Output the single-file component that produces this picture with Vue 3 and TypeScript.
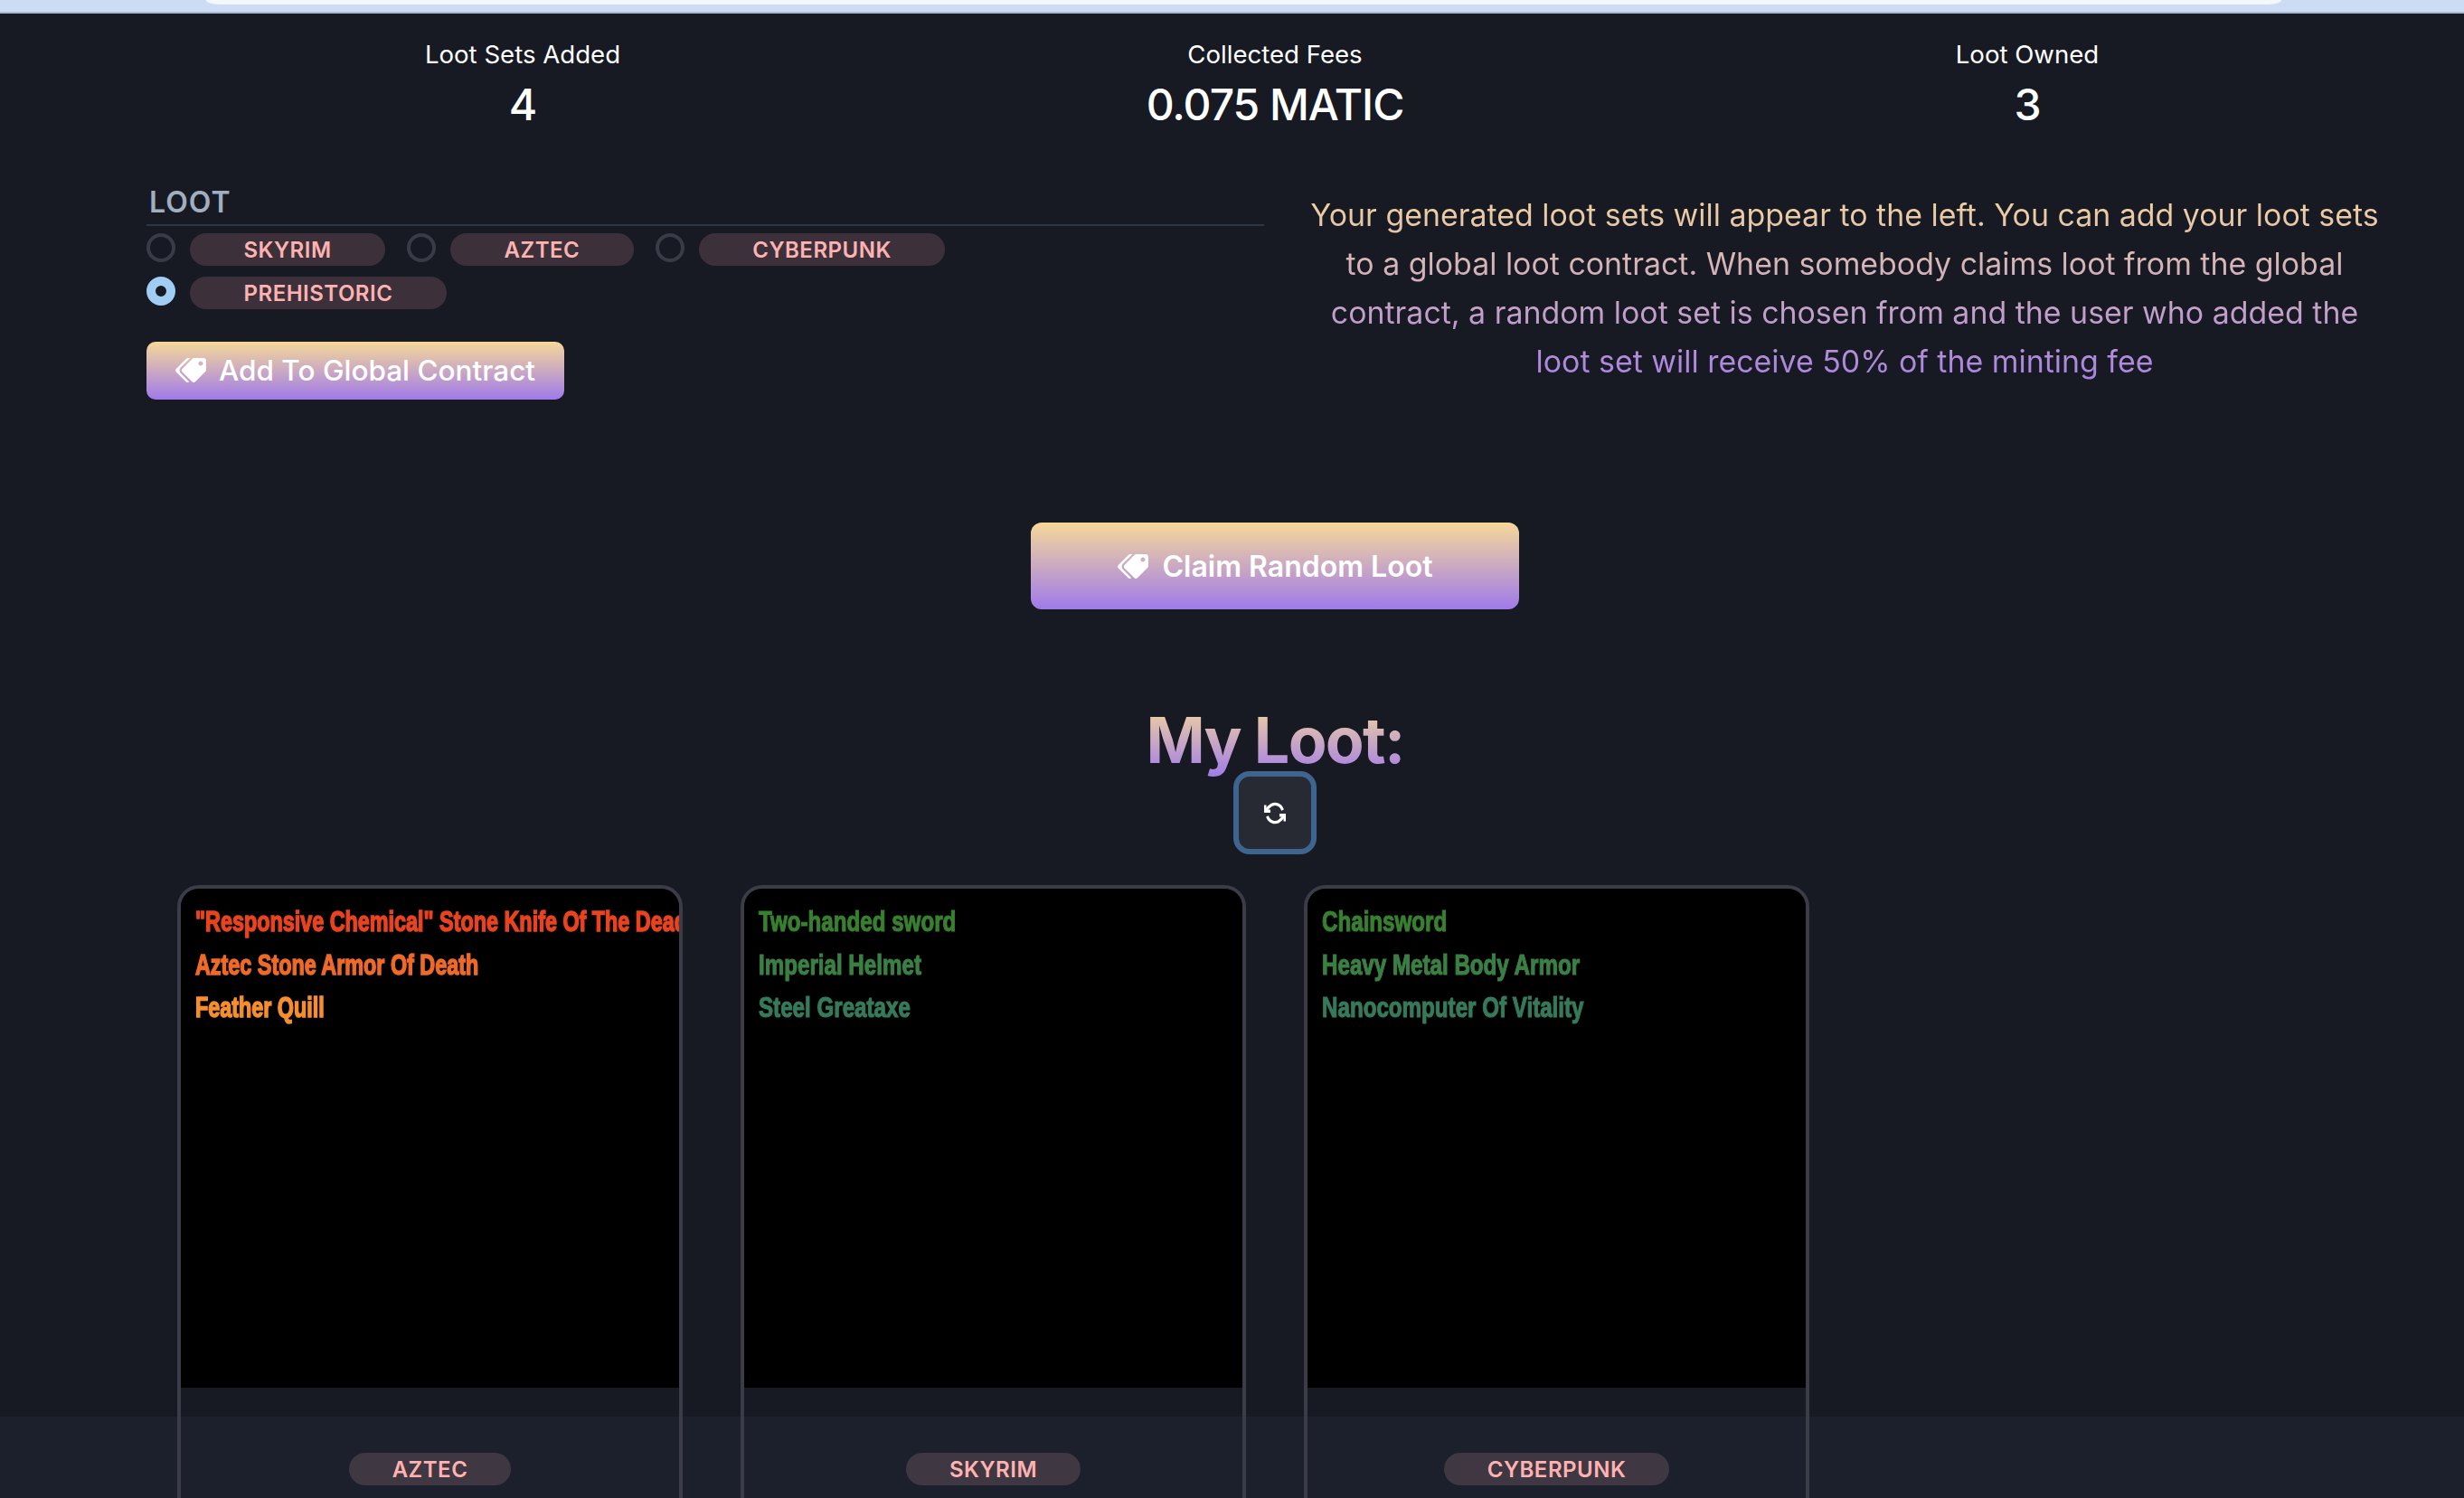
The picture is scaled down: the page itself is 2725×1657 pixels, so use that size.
<script setup lang="ts">
const tagPath =
  "M497.941 225.941L286.059 14.059A48 48 0 0 0 252.118 0H48C21.49 0 0 21.49 0 48v204.118a48 48 0 0 0 14.059 33.941l211.882 211.882c18.744 18.745 49.136 18.746 67.882 0l204.118-204.118c18.745-18.745 18.745-49.137 0-67.882zM112 160c-26.51 0-48-21.49-48-48s21.49-48 48-48 48 21.49 48 48-21.49 48-48 48zm513.941 133.823L421.823 497.941c-18.745 18.745-49.137 18.745-67.882 0l-.36-.36L527.64 323.522c16.999-16.999 26.36-39.6 26.36-63.64s-9.362-46.641-26.36-63.64L331.397 0h48.721a48 48 0 0 1 33.941 14.059l211.882 211.882c18.745 18.745 18.745 49.137 0 67.882z";

const stats = [
  { label: "Loot Sets Added", value: "4" },
  { label: "Collected Fees", value: "0.075 MATIC" },
  { label: "Loot Owned", value: "3" },
];

const options = [
  { name: "SKYRIM", checked: false },
  { name: "AZTEC", checked: false },
  { name: "CYBERPUNK", checked: false },
  { name: "PREHISTORIC", checked: true },
];

const cards = [
  {
    tag: "AZTEC",
    face: "impact",
    lines: [
      { text: '"Responsive Chemical" Stone Knife Of The Dead', color: "#e9431f" },
      { text: "Aztec Stone Armor Of Death", color: "#ef6a28" },
      { text: "Feather Quill", color: "#f68e2f" },
    ],
  },
  {
    tag: "SKYRIM",
    face: "narrow",
    lines: [
      { text: "Two-handed sword", color: "#37802f" },
      { text: "Imperial Helmet", color: "#3a8044" },
      { text: "Steel Greataxe", color: "#367a5c" },
    ],
  },
  {
    tag: "CYBERPUNK",
    face: "narrow",
    lines: [
      { text: "Chainsword", color: "#37802f" },
      { text: "Heavy Metal Body Armor", color: "#3a8044" },
      { text: "Nanocomputer Of Vitality", color: "#367a5c" },
    ],
  },
];
</script>

<template>
  <div class="page">
    <div class="browser-bar"><div class="browser-pill"></div></div>

    <section class="stats">
      <div v-for="stat in stats" :key="stat.label" class="stat">
        <div class="stat-label">{{ stat.label }}</div>
        <div class="stat-value">{{ stat.value }}</div>
      </div>
    </section>

    <section class="add-row">
      <div class="loot-form">
        <div class="loot-label">LOOT</div>
        <div class="options">
          <label v-for="opt in options" :key="opt.name" class="option">
            <span class="radio" :class="{ checked: opt.checked }"></span>
            <span class="tag">{{ opt.name }}</span>
          </label>
        </div>
        <button type="button" class="grad-btn add-btn">
          <svg class="tags-icon" viewBox="0 0 640 512" fill="currentColor">
            <path :d="tagPath" transform="matrix(-1 0 0 1 640 0)" />
          </svg>
          Add To Global Contract
        </button>
      </div>
      <p class="help">
        Your generated loot sets will appear to the left. You can add your loot sets<br />
        to a global loot contract. When somebody claims loot from the global<br />
        contract, a random loot set is chosen from and the user who added the<br />
        loot set will receive 50% of the minting fee
      </p>
    </section>

    <section class="center-col">
      <button type="button" class="grad-btn claim-btn">
        <svg class="tags-icon" viewBox="0 0 640 512" fill="currentColor">
          <path :d="tagPath" transform="matrix(-1 0 0 1 640 0)" />
        </svg>
        Claim Random Loot
      </button>

      <h2 class="title">My Loot:</h2>
      <button type="button" class="refresh" aria-label="Refresh">
        <svg viewBox="0 0 24 24" fill="none" stroke="currentColor" stroke-width="3" preserveAspectRatio="none">
          <path d="M1 4v6h6" />
          <path d="M23 20v-6h-6" />
          <path d="M20.490 9A9 9 0 0 0 5.640 5.640L1 10m22 4l-4.640 4.360A9 9 0 0 1 3.510 15" />
        </svg>
      </button>
    </section>

    <section class="cards">
      <article v-for="card in cards" :key="card.tag" class="card">
        <div class="sheet">
          <div
            v-for="line in card.lines"
            :key="line.text"
            class="loot-line"
            :class="card.face"
            :style="{ color: line.color }"
          >
            {{ line.text }}
          </div>
        </div>
        <div class="card-foot"><span class="tag">{{ card.tag }}</span></div>
      </article>
    </section>
  </div>
</template>

<style>
html,
body {
  margin: 0;
  background: #171923;
}
</style>

<style scoped>
.page {
  height: 1657px;
  overflow: hidden;
  box-sizing: border-box;
  font-family: Inter, "Liberation Sans", sans-serif;
  color: #fff;
  background: linear-gradient(#171923 1567px, #1b202c 1567px);
}

.browser-bar {
  height: 13px;
  background: #cddcf5;
  border-bottom: 2px solid #aab8d0;
  padding: 0 202px 0 228px;
}

.browser-pill {
  height: 5px;
  background: #f3f8fd;
  border-radius: 0 0 15px 15px / 0 0 5px 5px;
}

.stats {
  display: grid;
  grid-template-columns: repeat(3, 832px);
  margin-top: 25px;
  padding-left: 162px;
  text-align: center;
}

.stat-label {
  font-size: 27.600px;
  line-height: 40px;
}

.stat-value {
  font-size: 48px;
  line-height: 60px;
  font-weight: 500;
  letter-spacing: -1px;
  margin-top: 6px;
}

.add-row {
  display: flex;
  margin-top: 58px;
  padding-left: 162px;
}

.loot-form {
  width: 1236px;
}

.loot-label {
  font-size: 32px;
  line-height: 40px;
  font-weight: 600;
  letter-spacing: 1px;
  color: #a0aec0;
  padding-left: 3px;
  border-bottom: 2px solid #2d3748;
  padding-bottom: 4px;
}

.options {
  display: flex;
  flex-wrap: wrap;
  gap: 12px 24px;
  margin-top: 8px;
  width: 900px;
}

.option {
  display: flex;
  gap: 16px;
}

.radio {
  box-sizing: border-box;
  width: 32px;
  height: 32px;
  border-radius: 50%;
  border: 4px solid #383c47;
}

.radio.checked {
  border: 10px solid #9fcdf4;
  background: #171923;
}

.tag {
  display: inline-flex;
  align-items: center;
  height: 36px;
  padding: 0 59.500px;
  border-radius: 18px;
  background: rgba(254, 178, 178, 0.16);
  color: #feb2b2;
  font-size: 24px;
  font-weight: 600;
  letter-spacing: 0.5px;
}

.grad-btn {
  display: flex;
  align-items: center;
  justify-content: center;
  border: 0;
  color: #fff;
  font-family: inherit;
  background: linear-gradient(#f6d899, #9f7aea);
  cursor: pointer;
}

.add-btn {
  width: 462px;
  height: 64px;
  margin-top: 36px;
  padding: 0 0 2px;
  border-radius: 10px;
  gap: 14px;
  font-size: 31.500px;
  font-weight: 500;
}

.tags-icon {
  width: 34px;
  height: 27px;
}

.help {
  width: 1200px;
  margin: 0;
  margin-left: 42px;
  padding-top: 7px;
  text-align: center;
  white-space: nowrap;
  font-size: 33.900px;
  line-height: 54px;
  background: linear-gradient(#f6d899, #9f7aea);
  -webkit-background-clip: text;
  background-clip: text;
  color: transparent;
}

.center-col {
  display: flex;
  flex-direction: column;
  align-items: center;
  margin-top: 136px;
  padding-left: 95px;
}

.claim-btn {
  width: 540px;
  height: 96px;
  border-radius: 12px;
  gap: 16px;
  font-size: 32px;
  font-weight: 600;
}

.title {
  margin: 103px 0 0;
  font-size: 70px;
  line-height: 84px;
  font-weight: 700;
  letter-spacing: -1.750px;
  background: linear-gradient(#f6d899, #9f7aea);
  -webkit-background-clip: text;
  background-clip: text;
  color: transparent;
}

.refresh {
  box-sizing: border-box;
  width: 92px;
  height: 92px;
  margin-top: -8px;
  border: 6px solid #3d658f;
  border-radius: 18px;
  background: #282a33;
  color: #fff;
  display: flex;
  align-items: center;
  justify-content: center;
  padding: 0;
}

.refresh svg {
  width: 24px;
  height: 27px;
}

.cards {
  display: flex;
  gap: 64px;
  margin-top: 34px;
  padding-left: 196px;
}

.card {
  box-sizing: border-box;
  width: 559px;
  height: 900px;
  border: 4px solid #3a3c48;
  border-radius: 24px;
  overflow: hidden;
  flex: none;
}

.sheet {
  height: 552px;
  box-sizing: border-box;
  background: #000;
  padding: 13px 0 0 16px;
  overflow: hidden;
}

.loot-line {
  font-family: "Liberation Sans", sans-serif;
  font-size: 32px;
  font-weight: 700;
  line-height: 47.500px;
  white-space: nowrap;
  transform-origin: left center;
  -webkit-text-stroke: 1.200px currentColor;
}

.loot-line.impact {
  transform: scaleX(0.730);
  -webkit-text-stroke-width: 1.600px;
}

.loot-line.narrow {
  transform: scaleX(0.755);
}

.card-foot {
  display: flex;
  justify-content: center;
  padding-top: 72px;
}

.card-foot .tag {
  padding: 0 48px;
}
</style>
